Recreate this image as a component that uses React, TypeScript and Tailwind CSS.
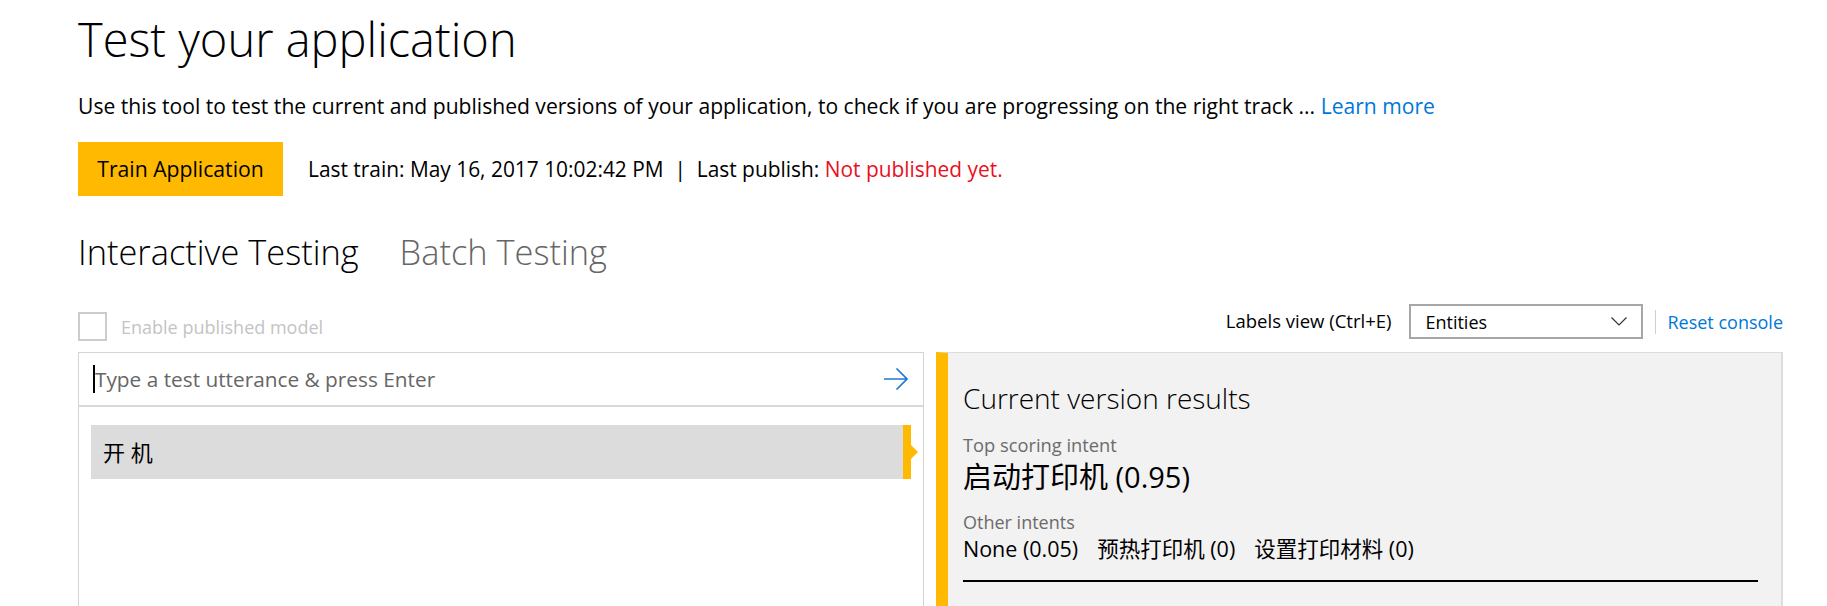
export default function App() {
  return (
    <div className="w-[1827px] h-[606px] overflow-hidden bg-white text-black font-['Open_Sans','Noto_Sans_CJK_SC',sans-serif] pl-[78px] pr-[44px]">
      <div className="h-[78px] flex items-center">
        <h1 className="text-[47px] font-light leading-none">Test your application</h1>
      </div>
      <div className="mt-[14px] h-[28px] flex items-center text-[21.1px] leading-none whitespace-nowrap">
        <span>Use this tool to test the current and published versions of your application, to check if you are progressing on the right track ...&nbsp;</span>
        <a className="text-[#0078d7]">Learn more</a>
      </div>
      <div className="mt-[22px] h-[54px] flex items-center">
        <button className="w-[205px] h-[54px] bg-[#ffb900] text-[21.2px] leading-none text-black">Train Application</button>
        <div className="ml-[25px] text-[20.9px] leading-none whitespace-nowrap">
          Last train: May 16, 2017 10:02:42 PM&nbsp; | &nbsp;Last publish: <span className="text-[#e81123]">Not published yet.</span>
        </div>
      </div>
      <div className="mt-[36px] h-[40px] flex items-center gap-[41px] text-[34.4px] font-light leading-none">
        <span className="text-black">Interactive Testing</span>
        <span className="text-[#666666]">Batch Testing</span>
      </div>
      <div className="mt-[32px] h-[38px] flex justify-between">
        <div className="flex items-center gap-[14px] mt-[8px] h-[29px] self-start">
          <div className="w-[29px] h-[29px] border-2 border-[#cccccc] bg-white" />
          <span className="text-[18px] leading-none text-[#c4c4c4]">Enable published model</span>
        </div>
        <div className="flex items-center h-[35px] self-start">
          <span className="text-[18.5px] leading-none">Labels view (Ctrl+E)</span>
          <div className="ml-[18px] w-[234px] h-[35px] border-2 border-[#a6a6a6] flex items-center justify-between pl-[14px] pr-[14px] bg-white">
            <span className="text-[18px] leading-none">Entities</span>
            <svg width="16" height="9" viewBox="0 0 16 9">
              <path d="M0.5 0.5 L8 8 L15.5 0.5" stroke="#333" strokeWidth="1.2" fill="none" />
            </svg>
          </div>
          <div className="ml-[12px] w-px h-[24px] bg-[#cfcfcf]" />
          <span className="ml-[11px] text-[18px] leading-none text-[#0078d7]">Reset console</span>
        </div>
      </div>
      <div className="mt-[10px] flex gap-[12px]">
        <div className="w-[846px] h-[260px] border border-[#d4d4d4] shrink-0">
          <div className="h-[54px] border-b-2 border-[#d9d9d9] flex items-center pl-[14px] pr-[15px]">
            <div className="w-[2px] h-[28px] bg-black" />
            <span className="text-[20.8px] leading-none text-[#666666] flex-1">Type a test utterance &amp; press Enter</span>
            <svg width="24" height="22" viewBox="0 0 24 22">
              <path d="M0 11 H23 M12.5 0.5 L23 11 L12.5 21.5" stroke="#1e78d6" strokeWidth="1.6" fill="none" />
            </svg>
          </div>
          <div className="mt-[18px] ml-[12px] mr-[12px] h-[54px] flex relative">
            <div className="flex-1 bg-[#dcdcdc] flex items-center pl-[12px]">
              <span className="text-[22px] leading-none">开 机</span>
            </div>
            <div className="w-[8px] bg-[#ffb900]" />
            <div className="absolute right-[-7px] top-[20px] w-0 h-0 border-y-[7px] border-y-transparent border-l-[7px] border-l-[#ffb900]" />
          </div>
        </div>
        <div className="flex-1 h-[260px] bg-[#f2f2f2] border-l-[12px] border-l-[#ffb900] border-t border-t-[#dddddd] border-r-2 border-r-[#dddddd] pl-[15px] pr-[23px]">
          <div className="mt-[31px] h-[28px] flex items-center text-[28px] font-light leading-none">Current version results</div>
          <div className="mt-[23px] h-[20px] flex items-center text-[18.3px] leading-none text-[#6b6b6b]">Top scoring intent</div>
          <div className="mt-[7px] h-[28px] flex items-center text-[29px] leading-none">启动打印机 (0.95)</div>
          <div className="mt-[22px] h-[20px] flex items-center text-[18px] leading-none text-[#6b6b6b]">Other intents</div>
          <div className="mt-[6px] h-[22px] flex items-center gap-[19px] text-[21.5px] leading-none">
            <span>None (0.05)</span>
            <span>预热打印机 (0)</span>
            <span>设置打印材料 (0)</span>
          </div>
          <div className="mt-[20px] h-[2px] bg-black" />
        </div>
      </div>
    </div>
  );
}
